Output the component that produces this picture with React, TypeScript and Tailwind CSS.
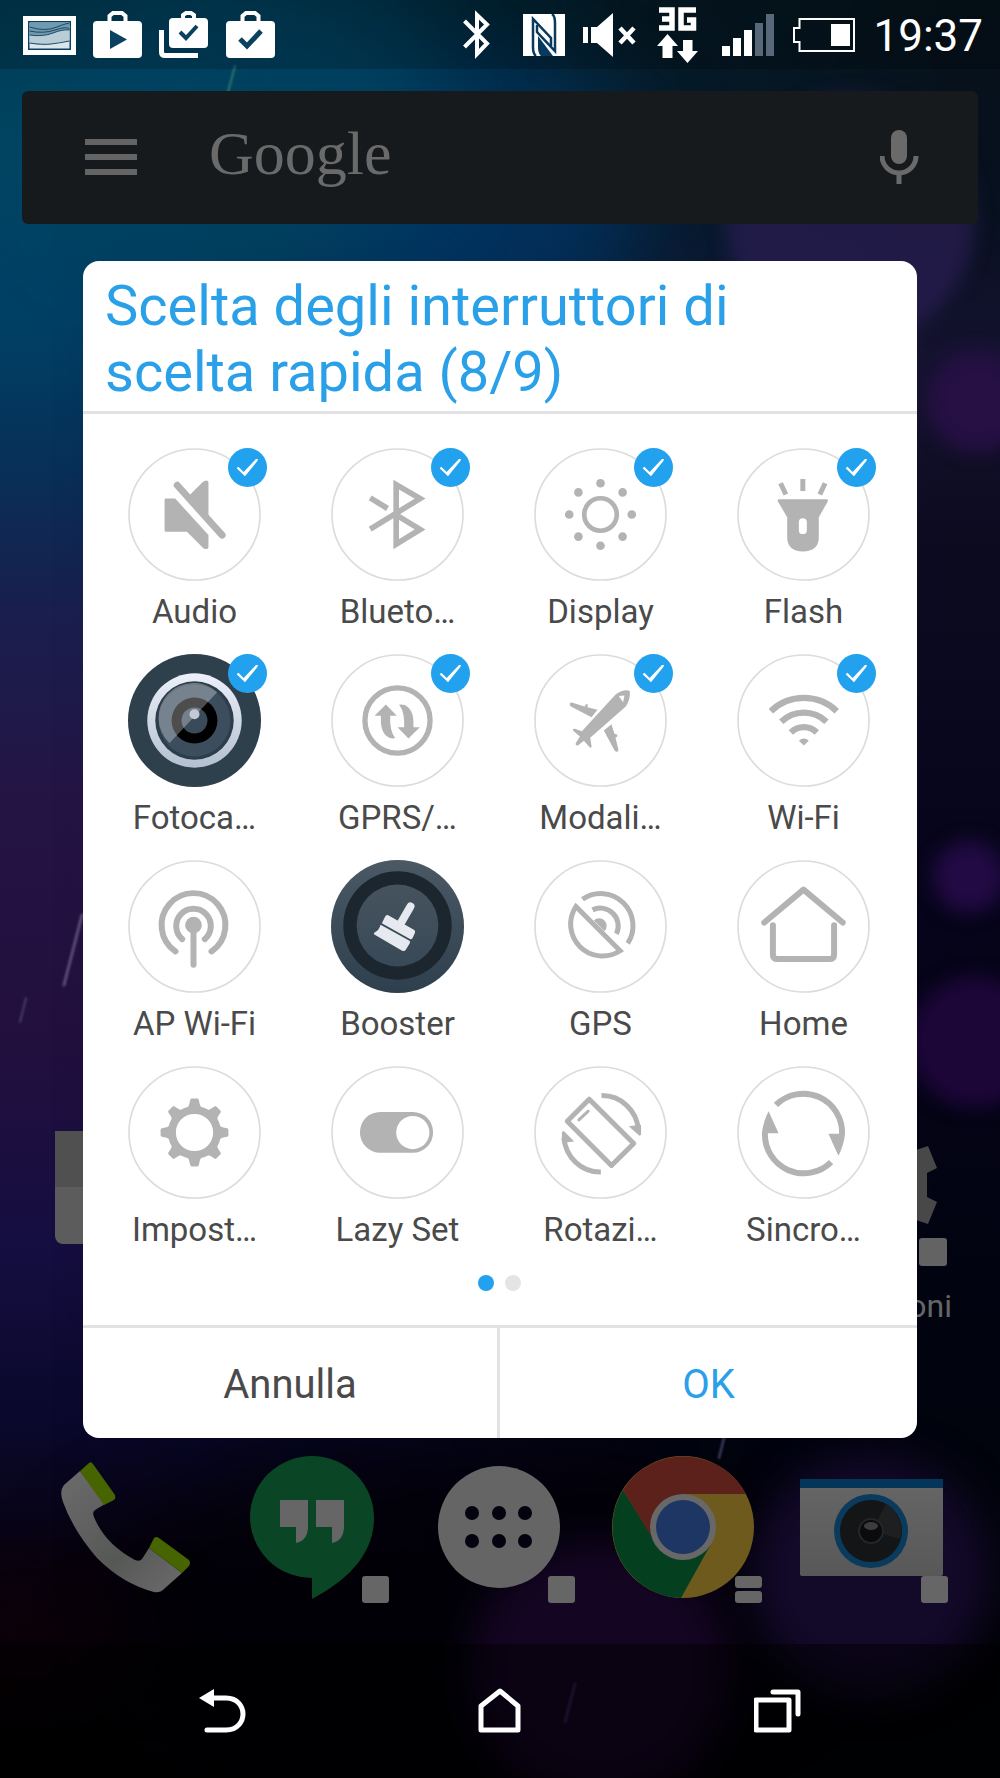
import React, { useState } from 'react';

const GREY = '#b3b3b3';

/* ---------- Switch icons, all drawn in a 400x400 box ---------- */

const Ring = () => <circle cx="200" cy="200" r="197" fill="#fff" stroke="#dcdcdc" strokeWidth="5" />;

const AudioIcon = () => (
  <g fill={GREY}>
    <path d="M185 142L224 103Q229 98 236 98Q242 98 242 104V208Z" />
    <path d="M114 152H142L242 262V298Q242 304 236 304H232Q229 304 226 301L177 252H114Q110 252 110 248V156Q110 152 114 152Z" />
    <path d="M148 112L283 262" fill="none" stroke={GREY} strokeWidth="21" strokeLinecap="round" />
  </g>
);

const BluetoothIcon = () => (
  <g fill="none" stroke={GREY} strokeWidth="17">
    <path d="M118 244L268 152L196 110V289L268 245L196 201" />
    <path d="M118 150L170 182" />
  </g>
);

const DisplayIcon = () => (
  <g fill={GREY}>
    <circle cx="200" cy="200" r="49" fill="none" stroke={GREY} strokeWidth="14" />
    {[0, 45, 90, 135, 180, 225, 270, 315].map((a) => (
      <circle key={a} cx="200" cy="106" r="13" transform={`rotate(${a} 200 200)`} />
    ))}
  </g>
);

const FlashIcon = () => (
  <g fill={GREY}>
    <path d="M198 93V129M131 106L147 140M265 106L249 140" stroke={GREY} strokeWidth="15" />
    <path d="M127 154H269Q275 154 273 161L246 208V272Q244 310 198 311Q153 310 151 272V208L123 161Q121 154 127 154Z" />
    <rect x="186" y="211" width="24" height="48" rx="12" fill="#fff" />
  </g>
);

const CameraLensIcon = () => (
  <g>
    <defs>
      <linearGradient id="lensRing" x1="0" y1="0" x2="0" y2="1">
        <stop offset="0" stopColor="#ecf0fa" />
        <stop offset="1" stopColor="#b4c0cf" />
      </linearGradient>
    </defs>
    <circle cx="200" cy="200" r="200" fill="#2f404d" />
    <circle cx="200" cy="200" r="142" fill="url(#lensRing)" />
    <circle cx="200" cy="200" r="118" fill="#2c3d4b" />
    <circle cx="200" cy="200" r="108" fill="#3c4e5e" />
    <circle cx="200" cy="200" r="69" fill="#000" />
    <circle cx="200" cy="200" r="39" fill="#3b4a58" />
    <path d="M125 268A103 103 0 0 1 268 115Z" fill="#fff" fillOpacity="0.3" />
    <circle cx="200" cy="181" r="15" fill="#c3cad3" />
  </g>
);

const DataArrow = () => (
  <path d="M165 152L198 186H178Q176 232 193 253Q186 256 175 252C152 240 149 215 150 186H131Z" />
);

const DataIcon = () => (
  <g fill={GREY}>
    <circle cx="200" cy="200" r="98" fill="none" stroke={GREY} strokeWidth="16" />
    <DataArrow />
    <g transform="rotate(180 199 203)">
      <DataArrow />
    </g>
  </g>
);

const PlaneIcon = () => (
  <g fill={GREY}>
    <path d="M246 121Q272 104 288 111Q291 134 276 158L169 252L173 276Q173 285 168 281L150 261L132 275Q123 276 126 268L138 248L118 231Q115 224 123 225L144 232Z" />
    <path d="M108 148Q112 144 118 147L152 158L157 150L162 152L161 160L191 168L173 190L111 158Q106 153 108 148Z" />
    <path d="M233 211L242 240L251 243L250 249L245 251L254 288Q254 296 246 293Q243 292 241 288L210 230Z" />
    <path d="M255 126L272 125L268 145Z" fill="#fff" />
  </g>
);

const WifiIcon = () => (
  <g fill="none" stroke={GREY} strokeWidth="19">
    <path d="M102 172A143 143 0 0 1 300 172" />
    <path d="M133 204A98 98 0 0 1 269 204" />
    <path d="M162 236A56 56 0 0 1 240 236" />
    <path d="M186 261Q201 247 216 261L201 275Z" fill={GREY} stroke="none" />
  </g>
);

const HotspotIcon = () => (
  <g fill="none" stroke={GREY} strokeWidth="18" strokeLinecap="round">
    <path d="M143 275A96 96 0 1 1 251 275" />
    <path d="M163 238A52 52 0 1 1 231 238" />
    <path d="M197 196V315" />
    <circle cx="197" cy="196" r="25" fill={GREY} stroke="none" />
  </g>
);

const BoosterIcon = () => (
  <g>
    <defs>
      <linearGradient id="boostOuter" x1="0" y1="0" x2="0" y2="1">
        <stop offset="0" stopColor="#4b5965" />
        <stop offset="1" stopColor="#2e3f4d" />
      </linearGradient>
      <linearGradient id="boostInner" x1="0" y1="0" x2="0" y2="1">
        <stop offset="0" stopColor="#46535e" />
        <stop offset="1" stopColor="#384957" />
      </linearGradient>
    </defs>
    <circle cx="200" cy="200" r="200" fill="url(#boostOuter)" />
    <circle cx="200" cy="197" r="163" fill="#1c262f" />
    <circle cx="200" cy="197" r="123" fill="url(#boostInner)" />
    <g fill="#e6eaf0">
      <path d="M239 140L209 192" stroke="#e6eaf0" strokeWidth="24" strokeLinecap="round" />
      <path d="M172 166L248 209Q255 213 252 220L245 235Q242 240 236 237L153 190L163 170Q166 163 172 166Z" />
      <path d="M149 195L236 243Q239 246 237 250L225 270Q221 276 214 273L129 223L130 219Q145 212 149 195Z" />
    </g>
  </g>
);

const GpsIcon = () => (
  <g fill="none" stroke={GREY} strokeWidth="15">
    <path d="M126 140L259 273A96 96 0 0 1 126 140Z" />
    <path d="M146 118A97 97 0 0 1 282 251" />
    <path d="M176 150A54 54 0 0 1 248 222" />
    <path d="M180 182A20 20 0 0 1 212 214Z" fill={GREY} stroke="none" />
  </g>
);

const HomeIcon = () => (
  <g fill="none" stroke={GREY} strokeWidth="18" strokeLinecap="round" strokeLinejoin="round">
    <path d="M82 188L200 89L318 188" />
    <path d="M108 196V284Q108 298 122 298H278Q292 298 292 284V196" />
  </g>
);

const SettingsIcon = () => (
  <g fill={GREY}>
    <circle cx="200" cy="200" r="68" fill="none" stroke={GREY} strokeWidth="24" />
    {[0, 45, 90, 135, 180, 225, 270, 315].map((a) => (
      <path
        key={a}
        d="M176 126Q182 124 184 116L187 102Q188 98 192 98H208Q212 98 213 102L216 116Q218 124 224 126V140H176Z"
        transform={`rotate(${a} 200 200)`}
      />
    ))}
  </g>
);

const LazyIcon = () => (
  <g>
    <rect x="87" y="138" width="220" height="123" rx="61" fill={GREY} />
    <circle cx="246" cy="200" r="50" fill="#fff" />
  </g>
);

const RotateIcon = () => (
  <g fill="none" stroke={GREY} strokeWidth="15" strokeLinejoin="round">
    <path d="M166 100L300 233L233 299L100 166Z" />
    <path d="M135 162L163 136" strokeWidth="9" strokeLinecap="round" />
    <path d="M203 89A110 112 0 0 1 314 192" />
    <path d="M285 181L322 177V207L317 210Z" fill={GREY} stroke="none" />
    <path d="M201 319A110 112 0 0 1 90 216" />
    <path d="M121 227L84 231V200L89 195Z" fill={GREY} stroke="none" />
  </g>
);

const SyncArc = () => (
  <g>
    <path d="M117 117A117 117 0 0 1 316 206" fill="none" stroke={GREY} strokeWidth="18" />
    <path d="M275 204H325Q321 240 305 270Z" fill={GREY} />
  </g>
);

const SyncIcon = () => (
  <g>
    <SyncArc />
    <g transform="rotate(180 200 203)">
      <SyncArc />
    </g>
  </g>
);

const switches = [
  { label: 'Audio', icon: <AudioIcon />, on: true },
  { label: 'Blueto…', icon: <BluetoothIcon />, on: true },
  { label: 'Display', icon: <DisplayIcon />, on: true },
  { label: 'Flash', icon: <FlashIcon />, on: true },
  { label: 'Fotoca…', icon: <CameraLensIcon />, on: true },
  { label: 'GPRS/…', icon: <DataIcon />, on: true },
  { label: 'Modali…', icon: <PlaneIcon />, on: true },
  { label: 'Wi-Fi', icon: <WifiIcon />, on: true },
  { label: 'AP Wi-Fi', icon: <HotspotIcon />, on: false },
  { label: 'Booster', icon: <BoosterIcon />, on: false },
  { label: 'GPS', icon: <GpsIcon />, on: false },
  { label: 'Home', icon: <HomeIcon />, on: false },
  { label: 'Impost…', icon: <SettingsIcon />, on: false },
  { label: 'Lazy Set', icon: <LazyIcon />, on: false },
  { label: 'Rotazi…', icon: <RotateIcon />, on: false },
  { label: 'Sincro…', icon: <SyncIcon />, on: false },
];

/* ---------- Wallpaper ---------- */

const Wallpaper = () => (
  <svg className="absolute inset-0 w-full h-full" viewBox="0 0 1000 1778" preserveAspectRatio="none" aria-hidden="true">
    <defs>
      <linearGradient id="wallLeft" x1="0" y1="0" x2="0" y2="1">
        <stop offset="0" stopColor="#003a50" />
        <stop offset="0.08" stopColor="#004562" />
        <stop offset="0.18" stopColor="#004065" />
        <stop offset="0.26" stopColor="#073058" />
        <stop offset="0.34" stopColor="#181f4e" />
        <stop offset="0.45" stopColor="#241444" />
        <stop offset="0.58" stopColor="#220f3e" />
        <stop offset="0.7" stopColor="#150e40" />
        <stop offset="0.8" stopColor="#0a082b" />
        <stop offset="0.88" stopColor="#08030f" />
        <stop offset="1" stopColor="#020101" />
      </linearGradient>
      <linearGradient id="wallRight" x1="0" y1="0" x2="0" y2="1">
        <stop offset="0" stopColor="#06121a" />
        <stop offset="0.12" stopColor="#07101f" />
        <stop offset="0.2" stopColor="#151230" />
        <stop offset="0.3" stopColor="#0d0b20" />
        <stop offset="0.5" stopColor="#06041a" />
        <stop offset="0.75" stopColor="#01030f" />
        <stop offset="1" stopColor="#000305" />
      </linearGradient>
      <linearGradient id="fade" x1="0" y1="0" x2="1" y2="0">
        <stop offset="0.05" stopColor="#000" />
        <stop offset="0.4" stopColor="#555" />
        <stop offset="0.65" stopColor="#ccc" />
        <stop offset="0.95" stopColor="#fff" />
      </linearGradient>
      <mask id="rightMask">
        <rect width="1000" height="1778" fill="url(#fade)" />
      </mask>
      <filter id="soft" x="-50%" y="-50%" width="200%" height="200%" colorInterpolationFilters="sRGB">
        <feGaussianBlur stdDeviation="45" />
      </filter>
      <filter id="edge" x="-20%" y="-20%" width="140%" height="140%" colorInterpolationFilters="sRGB">
        <feGaussianBlur stdDeviation="9" />
      </filter>
      <filter id="haze" x="-30%" y="-30%" width="160%" height="160%" colorInterpolationFilters="sRGB">
        <feGaussianBlur stdDeviation="20" />
      </filter>
      <filter id="thin" x="-200%" y="-20%" width="500%" height="140%" colorInterpolationFilters="sRGB">
        <feGaussianBlur stdDeviation="1" />
      </filter>
    </defs>
    <rect width="1000" height="1778" fill="url(#wallLeft)" />
    <rect width="1000" height="1778" fill="url(#wallRight)" mask="url(#rightMask)" />
    <ellipse cx="480" cy="190" rx="170" ry="120" fill="#00356a" fillOpacity="0.7" filter="url(#soft)" />
    <ellipse cx="240" cy="120" rx="200" ry="150" fill="#004364" fillOpacity="0.8" filter="url(#soft)" />
    <ellipse cx="480" cy="1640" rx="420" ry="190" fill="#010006" fillOpacity="0.8" filter="url(#soft)" />
    <ellipse cx="30" cy="1640" rx="110" ry="50" fill="#130006" fillOpacity="0.5" filter="url(#soft)" />
    <g filter="url(#edge)">
      <circle cx="850" cy="220" r="125" fill="#281e52" fillOpacity="0.75" />
      <circle cx="977" cy="402" r="50" fill="#261044" />
      <circle cx="969" cy="877" r="36" fill="#220a44" />
      <circle cx="975" cy="1042" r="66" fill="#1c0638" />
    </g>
    <g filter="url(#haze)">
      <circle cx="600" cy="1670" r="130" fill="#170628" fillOpacity="0.85" />
      <circle cx="870" cy="1575" r="120" fill="#150a2e" fillOpacity="0.9" />
    </g>
    <g strokeLinecap="round" filter="url(#thin)">
      <path d="M235 66L228 92" stroke="#2c7a70" strokeWidth="2" />
      <path d="M82 915L64 985" stroke="#5d4e7a" strokeWidth="3" />
      <path d="M26 998L20 1022" stroke="#4a3d68" strokeWidth="2" />
      <path d="M724 1438L719 1458" stroke="#4b4670" strokeWidth="2" />
      <path d="M575 1684L565 1722" stroke="#2e2450" strokeWidth="3" />
    </g>
    {/* status and navigation bar tint */}
    <rect width="1000" height="69" fill="#000" fillOpacity="0.18" />
    <rect y="1644" width="1000" height="134" fill="#000" fillOpacity="0.45" />
  </svg>
);

/* ---------- Status bar ---------- */

const Bag = ({ children }: { children: React.ReactNode }) => (
  <svg width="49" height="47" viewBox="0 0 49 47">
    <path d="M16.500 11V5L20 2H29L32.500 5V11" fill="none" stroke="#fff" strokeWidth="4" />
    <rect y="10" width="49" height="37" rx="4" fill="#fff" />
    {children}
  </svg>
);

const StatusBar = () => (
  <header className="h-[69px] pl-[23px] pr-[17px] flex items-center justify-between">
    <div className="flex items-center gap-[17px]">
      <svg width="53" height="40" viewBox="0 0 53 40">
        <rect y="1" width="53" height="39" fill="#fff" />
        <rect x="5" y="6" width="43" height="29" fill="#0b4160" />
        <rect x="6.500" y="7.500" width="40" height="26" fill="#dbe5ec" />
        <path d="M6.500 7.500H46.500V16Q38 17 30 20Q18 20 6.500 21Z" fill="#6f9ab0" />
        <path d="M6.500 20Q20 22 30 18T46.500 15V26Q36 26 28 29T6.500 28Z" fill="#b9cdd8" />
        <path d="M6.500 12Q22 17 34 12T46.500 9M6.500 16Q20 19 32 15T46.500 14M6.500 20Q20 22 30 18T46.500 15M6.500 28Q20 30 28 29T46.500 26" fill="none" stroke="#1d4a63" strokeWidth="1" />
      </svg>
      <Bag>
        <path d="M17 19L34 28.500L17 38Z" fill="#0b4160" />
      </Bag>
      <svg width="50" height="47" viewBox="0 0 50 47">
        <path d="M2.500 19V41Q2.500 44.500 6 44.500H39" fill="none" stroke="#fff" strokeWidth="5" />
        <path d="M24 9V4L27 2H32L35 4V9" fill="none" stroke="#fff" strokeWidth="4" />
        <rect x="10" y="7" width="39" height="30" rx="4" fill="#fff" />
        <path d="M21 21L27 27L38 15" fill="none" stroke="#0b4160" strokeWidth="4" />
      </svg>
      <Bag>
        <path d="M14 28L21 35L35 20" fill="none" stroke="#0b4160" strokeWidth="5" />
      </Bag>
    </div>

    <div className="flex items-center gap-[18px]">
      <svg width="42" height="52" viewBox="0 0 42 52">
        <path d="M1.500 12L24 34.500L14 45V6L24 15.500L1.500 38" fill="none" stroke="#fff" strokeWidth="4" />
      </svg>
      <svg width="42" height="42" viewBox="0 0 42 42">
        <path d="M0 0H42V42H0Z" fill="#fff" />
        <path d="M13 42Q10 40 10 33V5L28 24V32" fill="none" stroke="#083a5e" strokeWidth="2.500" />
        <path d="M29 0Q32 2 32 9V37L14 18V11" fill="none" stroke="#083a5e" strokeWidth="2.500" />
        <path d="M15 22V34Q15 39 18 42H30Z" fill="#083a5e" />
        <path d="M27 19V8Q27 3 24 0H12Z" fill="#083a5e" fillOpacity="0" />
      </svg>
      <svg width="54" height="44" viewBox="0 0 54 44">
        <path d="M0 14H5V30H0ZM8 14H14L30 0V44L14 30H8Z" fill="#fff" />
        <path d="M37 15L51 30M51 15L37 30" stroke="#fff" strokeWidth="4.500" />
      </svg>
      <svg width="45" height="56" viewBox="-2 0 45 56" aria-label="3G">
        <g fill="none" stroke="#fff" strokeWidth="5.500">
          <path d="M2 3H15V21H2M5 12H15" />
          <path d="M39 3H24V21H36.500V13H30" />
        </g>
        <path d="M10.500 27L21 39H15.500V51H5.500V39H0Z" fill="#fff" />
        <path d="M30.500 56L20 44H26V33H35.500V44H41Z" fill="#fff" />
      </svg>
      <svg width="57" height="42" viewBox="0 0 57 42">
        <path d="M4 32H12V42H4ZM15 24H23V42H15ZM26 16H34V42H26Z" fill="#fff" />
        <path d="M37 9H45V42H37ZM48 0H56V42H48Z" fill="#596878" />
      </svg>
      <svg width="62" height="34" viewBox="0 0 62 34">
        <path d="M6.500 1H61V33H6.500V24H1V10H6.500Z" fill="none" stroke="#fff" strokeWidth="2" />
        <rect x="38" y="6" width="19" height="22" fill="#fff" />
      </svg>
      <time className="pt-0.5 text-[44px] leading-[52px] text-white">19:37</time>
    </div>
  </header>
);

/* ---------- Dock ---------- */

const Badge = () => <rect x="126" y="120" width="27" height="27" rx="3" fill="#666" />;

const dockApps = [
  {
    name: 'Telefono',
    art: (
      <g>
        <defs>
          <linearGradient id="handset" x1="0" y1="0" x2="1" y2="1">
            <stop offset="0" stopColor="#6b6b6b" />
            <stop offset="0.6" stopColor="#565856" />
            <stop offset="1" stopColor="#6b6b6b" />
          </linearGradient>
        </defs>
        <path d="M31 15L15 29Q10 35 14 46Q24 74 48 102Q74 128 105 136Q111 137 115 133L133 117L100 92L93 103Q91 106 86 104Q56 88 45 61Q43 56 46 54L56 48Z" fill="url(#handset)" />
        <path d="M31 15L40 7Q42 5 44 8L66 39Q67 42 65 44L55 49ZM100 92L105 82Q107 80 110 82L140 104Q142 107 140 110L133 117Z" fill="#466400" />
      </g>
    ),
  },
  {
    name: 'Hangouts',
    art: (
      <g>
        <path d="M76 0A62 61 0 0 0 76 122V143C112 124 138 98 138 62A62 62 0 0 0 76 0Z" fill="#0a4526" />
        <path d="M44 44H72V72Q71 85 60 87V71H44ZM80 44H108V72Q107 85 96 87V71H80Z" fill="#666" />
        <Badge />
      </g>
    ),
  },
  {
    name: 'App',
    art: (
      <g>
        <circle cx="77" cy="71" r="61" fill="#656565" />
        <g fill="#04020f">
          <circle cx="50" cy="57" r="7" />
          <circle cx="77" cy="57" r="7" />
          <circle cx="103" cy="57" r="7" />
          <circle cx="50" cy="85" r="7" />
          <circle cx="77" cy="85" r="7" />
          <circle cx="103" cy="85" r="7" />
        </g>
        <Badge />
      </g>
    ),
  },
  {
    name: 'Chrome',
    art: (
      <g>
        <circle cx="75" cy="71" r="71" fill="#6f5a1e" />
        <path d="M15 34A71 71 0 0 0 73 142L103 88L43 79Z" fill="#04401f" />
        <path d="M15 34A71 71 0 0 1 138 38H75L48 88Z" fill="#5c211a" />
        <circle cx="75" cy="71" r="33" fill="#686868" />
        <circle cx="75" cy="71" r="27" fill="#1d3664" />
        <rect x="127" y="120" width="27" height="12" rx="3" fill="#666" />
        <rect x="127" y="135" width="27" height="12" rx="3" fill="#666" />
      </g>
    ),
  },
  {
    name: 'Fotocamera',
    art: (
      <g>
        <defs>
          <linearGradient id="camBody" x1="0" y1="0" x2="0" y2="1">
            <stop offset="0" stopColor="#666" />
            <stop offset="1" stopColor="#585858" />
          </linearGradient>
        </defs>
        <rect x="5" y="23" width="143" height="97" rx="2" fill="url(#camBody)" />
        <rect x="5" y="23" width="143" height="9" fill="#04365a" />
        <circle cx="76" cy="75" r="37" fill="#0a3a5c" />
        <circle cx="76" cy="75" r="31" fill="#131517" />
        <path d="M77 75L91 48A30 30 0 0 1 105 83Z" fill="#1d1f20" />
        <circle cx="76" cy="75" r="12" fill="#0b0b0b" stroke="#242628" strokeWidth="2" />
        <ellipse cx="76" cy="70" rx="7" ry="4" fill="#3c3c3e" />
        <Badge />
      </g>
    ),
  },
];

const Dock = () => (
  <section className="flex-1 grid grid-cols-5 pl-8 pr-9 pt-[18px] pb-10">
    {dockApps.map((app) => (
      <button key={app.name} aria-label={app.name} className="flex justify-center">
        <svg className="overflow-visible" width="152" height="148" viewBox="0 0 152 148">
          {app.art}
        </svg>
      </button>
    ))}
  </section>
);

const NavBar = () => (
  <nav className="h-[134px] px-[83px] grid grid-cols-3 place-items-center">
    <button aria-label="Indietro">
      <svg width="48" height="48" viewBox="0 0 48 48" fill="none" stroke="#fff" strokeWidth="5" strokeLinecap="round">
        <path d="M15 11H28C40 11 45 20 45 27S40 43 28 43H9" />
        <path d="M1 11L16 2V20Z" fill="#fff" stroke="none" />
      </svg>
    </button>
    <button aria-label="Home">
      <svg width="48" height="48" viewBox="0 0 48 48" fill="none" stroke="#fff" strokeWidth="5" strokeLinejoin="round">
        <path d="M5 43V19L24 4L42 19V43Z" />
      </svg>
    </button>
    <button aria-label="Recenti">
      <svg width="48" height="48" viewBox="0 0 48 48" fill="none" stroke="#fff" strokeWidth="5" strokeLinecap="round" strokeLinejoin="round">
        <rect x="2" y="13" width="33" height="30" />
        <path d="M19 5H44V27" />
      </svg>
    </button>
  </nav>
);

const App: React.FC = () => {
  const [active, setActive] = useState(switches.map((s) => s.on));
  const toggle = (idx: number) => setActive(active.map((on, i) => (i === idx ? !on : on)));

  return (
    <div className="relative min-h-screen bg-black overflow-hidden font-['Roboto',sans-serif]">
      <Wallpaper />

      <div className="relative min-h-screen flex flex-col">
        <StatusBar />

        {/* Search widget */}
        <div className="mt-[22px] mx-[22px] h-[133px] bg-[#161a1d] rounded-md flex items-center pl-[63px] pr-[58px] pb-0.5">
          <button aria-label="Menu" className="flex flex-col gap-[9px]">
            <span className="w-[52px] h-1.5 bg-[#646464]"></span>
            <span className="w-[52px] h-1.5 bg-[#646464]"></span>
            <span className="w-[52px] h-1.5 bg-[#646464]"></span>
          </button>
          <span className="ml-[72px] pb-2 flex-1 font-['Liberation_Serif',serif] text-[62px] leading-[72px] text-[#6a6a6a]">Google</span>
          <button aria-label="Ricerca vocale">
            <svg width="40" height="54" viewBox="0 0 40 54">
              <rect x="11" width="16" height="34" rx="8" fill="#6a6a6a" />
              <path d="M2 26A17 17 0 0 0 36 26M19 43V54" fill="none" stroke="#6a6a6a" strokeWidth="5" />
            </svg>
          </button>
        </div>

        <main className="relative mt-[37px] px-[83px]">
          {/* Launcher items that stick out from under the dialog */}
          <div className="absolute left-[55px] top-[870px] w-20 h-[113px] rounded-b-lg bg-linear-to-b from-[#505050] from-50% to-[#5c5c5c] to-50%"></div>
          <div className="absolute right-12 top-[885px] flex flex-col items-end">
            <svg width="46" height="120" viewBox="0 0 46 120">
              <path d="M0 8L10 4L22 0L31 22L21 27V51L31 56L22 78L10 74L0 70Z" fill="#484848" />
              <rect x="13" y="92" width="28" height="28" rx="3" fill="#636363" />
            </svg>
            <span className="mt-[22px] text-[32px] leading-9 text-[#666]">oni</span>
          </div>

          {/* Dialog */}
          <form
            role="dialog"
            aria-labelledby="dialog-title"
            onSubmit={(e) => e.preventDefault()}
            className="relative bg-white rounded-2xl overflow-hidden text-[#4a4a4a]"
          >
            <h1 id="dialog-title" className="pl-[22px] pr-12 pt-3 pb-1.5 text-[56px] leading-[66px] text-[#29a0e8] border-b-3 border-[#e2e2e2]">
              Scelta degli interruttori di scelta rapida (8/9)
            </h1>

            <div className="grid grid-cols-4 gap-y-[22px] pl-[10px] pr-3 pt-[34px]">
              {switches.map((item, idx) => (
                <label key={item.label} className="flex flex-col items-center cursor-pointer">
                  <span className="relative">
                    <svg width="133" height="133" viewBox="0 0 400 400">
                      <Ring />
                      {item.icon}
                    </svg>
                    <input
                      type="checkbox"
                      checked={active[idx]}
                      onChange={() => toggle(idx)}
                      className="peer absolute top-0 -right-1.5 size-[39px] appearance-none rounded-full checked:bg-[#22a2ee]"
                    />
                    <svg className="absolute top-0 -right-1.5 hidden peer-checked:block pointer-events-none" width="39" height="39" viewBox="0 0 117 117">
                      <path d="M26 61L31 56L47 72L84 33L90 33L88 39L51 85Z" fill="#fff" />
                    </svg>
                  </span>
                  <span className="mt-[11px] text-[33px] leading-10">{item.label}</span>
                </label>
              ))}
            </div>

            {/* Page indicator */}
            <div className="flex justify-center gap-[11px] pt-[25px] pb-[34px] pr-0.5">
              <span className="size-4 rounded-full bg-[#22a2ee]"></span>
              <span className="size-4 rounded-full bg-[#e4e4e4]"></span>
            </div>

            <div className="grid grid-cols-2 h-[113px] border-t-3 border-[#e2e2e2] text-[40px] leading-[48px]">
              <button type="button" className="pt-1 border-r-3 border-[#e2e2e2]">Annulla</button>
              <button type="submit" className="pt-1 text-[#29a0e8]">OK</button>
            </div>
          </form>
        </main>

        <Dock />
        <NavBar />
      </div>
    </div>
  );
};

export default App;
